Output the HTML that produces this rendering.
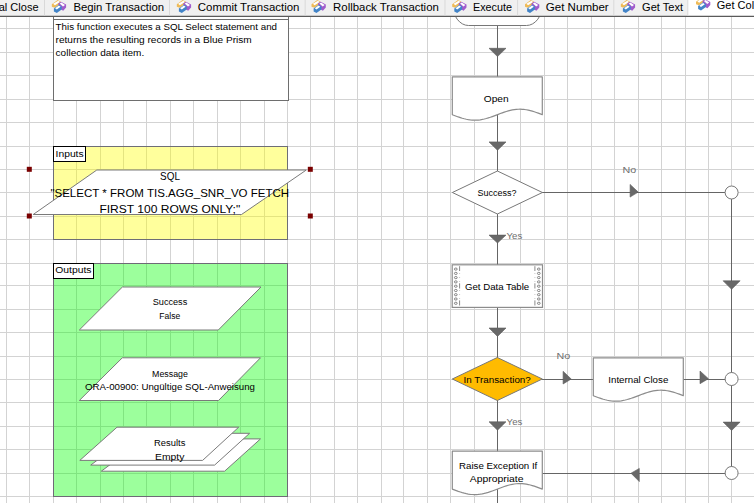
<!DOCTYPE html>
<html><head><meta charset="utf-8"><title>Blue Prism Process</title>
<style>html,body{margin:0;padding:0;background:#fff;overflow:hidden;width:754px;height:503px}svg{display:block}</style>
</head><body>
<svg width="754" height="503" viewBox="0 0 754 503"><g stroke="#d3d3d3" stroke-width="1" shape-rendering="crispEdges"><line x1="6.5" y1="0" x2="6.5" y2="503"/><line x1="29.5" y1="0" x2="29.5" y2="503"/><line x1="53.5" y1="0" x2="53.5" y2="503"/><line x1="76.5" y1="0" x2="76.5" y2="503"/><line x1="100.5" y1="0" x2="100.5" y2="503"/><line x1="123.5" y1="0" x2="123.5" y2="503"/><line x1="146.5" y1="0" x2="146.5" y2="503"/><line x1="170.5" y1="0" x2="170.5" y2="503"/><line x1="193.5" y1="0" x2="193.5" y2="503"/><line x1="217.5" y1="0" x2="217.5" y2="503"/><line x1="240.5" y1="0" x2="240.5" y2="503"/><line x1="264.5" y1="0" x2="264.5" y2="503"/><line x1="287.5" y1="0" x2="287.5" y2="503"/><line x1="310.5" y1="0" x2="310.5" y2="503"/><line x1="334.5" y1="0" x2="334.5" y2="503"/><line x1="357.5" y1="0" x2="357.5" y2="503"/><line x1="381.5" y1="0" x2="381.5" y2="503"/><line x1="403.5" y1="0" x2="403.5" y2="503"/><line x1="427.5" y1="0" x2="427.5" y2="503"/><line x1="450.5" y1="0" x2="450.5" y2="503"/><line x1="474.5" y1="0" x2="474.5" y2="503"/><line x1="497.5" y1="0" x2="497.5" y2="503"/><line x1="520.5" y1="0" x2="520.5" y2="503"/><line x1="544.5" y1="0" x2="544.5" y2="503"/><line x1="567.5" y1="0" x2="567.5" y2="503"/><line x1="591.5" y1="0" x2="591.5" y2="503"/><line x1="614.5" y1="0" x2="614.5" y2="503"/><line x1="638.5" y1="0" x2="638.5" y2="503"/><line x1="661.5" y1="0" x2="661.5" y2="503"/><line x1="685.5" y1="0" x2="685.5" y2="503"/><line x1="708.5" y1="0" x2="708.5" y2="503"/><line x1="731.5" y1="0" x2="731.5" y2="503"/><line x1="0" y1="5.5" x2="754" y2="5.5"/><line x1="0" y1="28.5" x2="754" y2="28.5"/><line x1="0" y1="52.5" x2="754" y2="52.5"/><line x1="0" y1="75.5" x2="754" y2="75.5"/><line x1="0" y1="99.5" x2="754" y2="99.5"/><line x1="0" y1="122.5" x2="754" y2="122.5"/><line x1="0" y1="146.5" x2="754" y2="146.5"/><line x1="0" y1="169.5" x2="754" y2="169.5"/><line x1="0" y1="192.5" x2="754" y2="192.5"/><line x1="0" y1="216.5" x2="754" y2="216.5"/><line x1="0" y1="239.5" x2="754" y2="239.5"/><line x1="0" y1="263.5" x2="754" y2="263.5"/><line x1="0" y1="285.5" x2="754" y2="285.5"/><line x1="0" y1="309.5" x2="754" y2="309.5"/><line x1="0" y1="332.5" x2="754" y2="332.5"/><line x1="0" y1="356.5" x2="754" y2="356.5"/><line x1="0" y1="379.5" x2="754" y2="379.5"/><line x1="0" y1="402.5" x2="754" y2="402.5"/><line x1="0" y1="426.5" x2="754" y2="426.5"/><line x1="0" y1="449.5" x2="754" y2="449.5"/><line x1="0" y1="473.5" x2="754" y2="473.5"/><line x1="0" y1="496.5" x2="754" y2="496.5"/></g>
<g font-family='"Liberation Sans", sans-serif'>
<rect x="53.5" y="5.5" width="235" height="95" fill="#fff" stroke="#6e6e6e" stroke-width="1" shape-rendering="crispEdges"/>
<line x1="53.5" y1="19.5" x2="288.5" y2="19.5" stroke="#6e6e6e" stroke-width="1" shape-rendering="crispEdges"/>
<text x="55.6" y="29.8" font-size="9.2" fill="#000" textLength="221.4" lengthAdjust="spacingAndGlyphs">This function executes a SQL Select statement and</text>
<text x="55.6" y="42.8" font-size="9.2" fill="#000" textLength="196.1" lengthAdjust="spacingAndGlyphs">returns the resulting records in a Blue Prism</text>
<text x="55.6" y="55.9" font-size="9.2" fill="#000" textLength="88.6" lengthAdjust="spacingAndGlyphs">collection data item.</text>
<rect x="53.5" y="146.5" width="234" height="93" fill="#ffff00" fill-opacity="0.39" stroke="#6e6e76" stroke-width="1" shape-rendering="crispEdges"/>
<rect x="53.5" y="146.5" width="32" height="14.5" fill="#fff" stroke="#000" stroke-width="1" shape-rendering="crispEdges"/>
<text x="55.6" y="156.5" font-size="9.2" fill="#000" textLength="28.0" lengthAdjust="spacingAndGlyphs">Inputs</text>
<rect x="53.5" y="263.5" width="234" height="233" fill="#00ff00" fill-opacity="0.39" stroke="#6e6a76" stroke-width="1" shape-rendering="crispEdges"/>
<rect x="53.5" y="263.5" width="40" height="15" fill="#fff" stroke="#000" stroke-width="1" shape-rendering="crispEdges"/>
<text x="55.2" y="273.3" font-size="9.2" fill="#000" textLength="36.3" lengthAdjust="spacingAndGlyphs">Outputs</text>
<polygon points="96.8,170.0 306.3,170.0 241.5,214.5 33.2,214.5" fill="#fff" stroke="#7a7a7a" stroke-width="1"/>
<text x="160.1" y="179.9" font-size="11.1" fill="#000" textLength="19.8" lengthAdjust="spacingAndGlyphs">SQL</text>
<text x="50.4" y="196.6" font-size="11.1" fill="#000" textLength="238.8" lengthAdjust="spacingAndGlyphs">"SELECT * FROM TIS.AGG_SNR_VO FETCH</text>
<text x="99.4" y="213.0" font-size="11.1" fill="#000" textLength="140.8" lengthAdjust="spacingAndGlyphs">FIRST 100 ROWS ONLY;"</text>
<rect x="26.8" y="166.8" width="5" height="5" fill="#7a0000"/>
<rect x="307.8" y="166.8" width="5" height="5" fill="#7a0000"/>
<rect x="26.8" y="213.5" width="5" height="5" fill="#7a0000"/>
<rect x="307.8" y="213.5" width="5" height="5" fill="#7a0000"/>
<polygon points="122.4,287.0 261.0,287.0 218.3,330.0 79.3,330.0" fill="#fff" stroke="#7a7a7a" stroke-width="1"/>
<polygon points="122.3,357.8 260.5,357.8 218.5,400.5 79.3,400.5" fill="#fff" stroke="#7a7a7a" stroke-width="1"/>
<polygon points="144.6,438.9 260.5,438.9 224.6,471.2 101.3,471.2" fill="#fff" stroke="#7a7a7a" stroke-width="1"/>
<polygon points="133.6,433.3 249.6,433.3 214.6,465.1 90.7,465.1" fill="#fff" stroke="#7a7a7a" stroke-width="1"/>
<polygon points="117.0,427.2 238.7,427.2 202.6,460.4 79.8,460.4" fill="#fff" stroke="#7a7a7a" stroke-width="1"/>
<text x="152.7" y="304.9" font-size="9.2" fill="#000" textLength="34.6" lengthAdjust="spacingAndGlyphs">Success</text>
<text x="159.3" y="318.6" font-size="9.2" fill="#000" textLength="20.9" lengthAdjust="spacingAndGlyphs">False</text>
<text x="152.1" y="376.5" font-size="9.2" fill="#000" textLength="35.8" lengthAdjust="spacingAndGlyphs">Message</text>
<text x="85.0" y="390.2" font-size="9.2" fill="#000" textLength="170.0" lengthAdjust="spacingAndGlyphs">ORA-00900: Ungültige SQL-Anweisung</text>
<text x="154.1" y="446.0" font-size="9.2" fill="#000" textLength="31.3" lengthAdjust="spacingAndGlyphs">Results</text>
<text x="155.1" y="459.8" font-size="9.2" fill="#000" textLength="29.3" lengthAdjust="spacingAndGlyphs">Empty</text>
<g stroke="#656565" stroke-width="1" fill="none" shape-rendering="crispEdges"><line x1="497.5" y1="16" x2="497.5" y2="80"/><line x1="497.5" y1="110" x2="497.5" y2="172"/><line x1="497.5" y1="213" x2="497.5" y2="270"/><line x1="497.5" y1="300" x2="497.5" y2="358"/><line x1="497.5" y1="400" x2="497.5" y2="455"/><line x1="497.5" y1="485" x2="497.5" y2="503"/><line x1="542.4" y1="192.5" x2="725" y2="192.5"/><line x1="542.2" y1="379.5" x2="593.3" y2="379.5"/><line x1="683.2" y1="379.5" x2="725" y2="379.5"/><line x1="542" y1="473.5" x2="725" y2="473.5"/><line x1="731.5" y1="199" x2="731.5" y2="466.5"/></g>
<polygon points="489.0,48.3 506.0,48.3 497.5,56.6" fill="#686868" stroke="#5a5a5a" stroke-width="0.6" stroke-linejoin="miter"/>
<polygon points="489.0,141.9 506.0,141.9 497.5,150.3" fill="#686868" stroke="#5a5a5a" stroke-width="0.6" stroke-linejoin="miter"/>
<polygon points="489.0,235.1 506.0,235.1 497.5,243.0" fill="#686868" stroke="#5a5a5a" stroke-width="0.6" stroke-linejoin="miter"/>
<polygon points="489.0,328.0 506.0,328.0 497.5,336.4" fill="#686868" stroke="#5a5a5a" stroke-width="0.6" stroke-linejoin="miter"/>
<polygon points="489.0,421.8 506.0,421.8 497.5,430.2" fill="#686868" stroke="#5a5a5a" stroke-width="0.6" stroke-linejoin="miter"/>
<polygon points="723.1,280.8 740.1,280.8 731.6,289.3" fill="#686868" stroke="#5a5a5a" stroke-width="0.6" stroke-linejoin="miter"/>
<polygon points="723.1,422.1 740.1,422.1 731.6,430.5" fill="#686868" stroke="#5a5a5a" stroke-width="0.6" stroke-linejoin="miter"/>
<polygon points="630.1,184.4 638.2,192.1 630.1,197.1" fill="#686868" stroke="#5a5a5a" stroke-width="0.6" stroke-linejoin="miter"/>
<polygon points="563.1,371.3 571.2,379.0 563.1,384.0" fill="#686868" stroke="#5a5a5a" stroke-width="0.6" stroke-linejoin="miter"/>
<polygon points="700.0,371.0 708.4,378.7 700.0,383.7" fill="#686868" stroke="#5a5a5a" stroke-width="0.6" stroke-linejoin="miter"/>
<polygon points="639.3,468.4 631.0,473.2 639.3,481.6" fill="#686868" stroke="#5a5a5a" stroke-width="0.6" stroke-linejoin="miter"/>
<rect x="452.5" y="-17.5" width="90" height="43" rx="16" ry="21.5" fill="#fff" stroke="#777" stroke-width="1"/>
<path d="M452.3,76.8 H542.3 L542.30,114.70 L540.30,113.93 L538.30,113.18 L536.30,112.46 L534.30,111.79 L532.30,111.16 L530.30,110.61 L528.30,110.14 L526.30,109.76 L524.30,109.47 L522.30,109.28 L520.30,109.20 L518.30,109.23 L516.30,109.36 L514.30,109.60 L512.30,109.94 L510.30,110.37 L508.30,110.88 L506.30,111.47 L504.30,112.12 L502.30,112.82 L500.30,113.56 L498.30,114.32 L496.30,115.08 L494.30,115.84 L492.30,116.58 L490.30,117.28 L488.30,117.93 L486.30,118.52 L484.30,119.03 L482.30,119.46 L480.30,119.80 L478.30,120.04 L476.30,120.17 L474.30,120.20 L472.30,120.12 L470.30,119.93 L468.30,119.64 L466.30,119.26 L464.30,118.79 L462.30,118.24 L460.30,117.61 L458.30,116.94 L456.30,116.22 L454.30,115.47 L452.30,114.70 Z" fill="#fff" stroke="#8c8c8c" stroke-width="1.2" stroke-linejoin="round"/>
<path d="M593.3,357.8 H683.3 L683.30,395.70 L681.30,394.93 L679.30,394.18 L677.30,393.46 L675.30,392.79 L673.30,392.16 L671.30,391.61 L669.30,391.14 L667.30,390.76 L665.30,390.47 L663.30,390.28 L661.30,390.20 L659.30,390.23 L657.30,390.36 L655.30,390.60 L653.30,390.94 L651.30,391.37 L649.30,391.88 L647.30,392.47 L645.30,393.12 L643.30,393.82 L641.30,394.56 L639.30,395.32 L637.30,396.08 L635.30,396.84 L633.30,397.58 L631.30,398.28 L629.30,398.93 L627.30,399.52 L625.30,400.03 L623.30,400.46 L621.30,400.80 L619.30,401.04 L617.30,401.17 L615.30,401.20 L613.30,401.12 L611.30,400.93 L609.30,400.64 L607.30,400.26 L605.30,399.79 L603.30,399.24 L601.30,398.61 L599.30,397.94 L597.30,397.22 L595.30,396.47 L593.30,395.70 Z" fill="#fff" stroke="#8c8c8c" stroke-width="1.2" stroke-linejoin="round"/>
<path d="M452.3,451.2 H542.3 L542.30,489.10 L540.30,488.33 L538.30,487.58 L536.30,486.86 L534.30,486.19 L532.30,485.56 L530.30,485.01 L528.30,484.54 L526.30,484.16 L524.30,483.87 L522.30,483.68 L520.30,483.60 L518.30,483.63 L516.30,483.76 L514.30,484.00 L512.30,484.34 L510.30,484.77 L508.30,485.28 L506.30,485.87 L504.30,486.52 L502.30,487.22 L500.30,487.96 L498.30,488.72 L496.30,489.48 L494.30,490.24 L492.30,490.98 L490.30,491.68 L488.30,492.33 L486.30,492.92 L484.30,493.43 L482.30,493.86 L480.30,494.20 L478.30,494.44 L476.30,494.57 L474.30,494.60 L472.30,494.52 L470.30,494.33 L468.30,494.04 L466.30,493.66 L464.30,493.19 L462.30,492.64 L460.30,492.01 L458.30,491.34 L456.30,490.62 L454.30,489.87 L452.30,489.10 Z" fill="#fff" stroke="#8c8c8c" stroke-width="1.2" stroke-linejoin="round"/>
<polygon points="497.4,171.0 542.4,192.5 497.4,214.0 452.4,192.5" fill="#fff" fill-opacity="1" stroke="#787878" stroke-width="1"/>
<polygon points="497.3,357.5 542.3,379 497.3,400.5 452.3,379" fill="#ffbb00" fill-opacity="1" stroke="#787878" stroke-width="1"/>
<rect x="452.2" y="264.8" width="90.3" height="42.6" fill="#fff" stroke="#8c8c8c" stroke-width="1.2"/>
<g stroke="#8a8a8a" stroke-width="1"><line x1="459.6" y1="266.2" x2="459.6" y2="271"/><line x1="459.6" y1="283.3" x2="459.6" y2="288.5"/><line x1="459.6" y1="300.4" x2="459.6" y2="305.5"/><line x1="534.9" y1="266.2" x2="534.9" y2="271"/><line x1="534.9" y1="283.3" x2="534.9" y2="288.5"/><line x1="534.9" y1="300.4" x2="534.9" y2="305.5"/></g>
<g stroke="#c8c8c8" stroke-width="1" stroke-dasharray="1 3"><line x1="459.6" y1="273" x2="459.6" y2="282"/><line x1="459.6" y1="290" x2="459.6" y2="299"/><line x1="534.9" y1="273" x2="534.9" y2="282"/><line x1="534.9" y1="290" x2="534.9" y2="299"/></g>
<g fill="none" stroke="#6a6a6a" stroke-width="0.8"><ellipse cx="455.8" cy="269.1" rx="1.4" ry="1.1"/><ellipse cx="538.8" cy="269.1" rx="1.4" ry="1.1"/><ellipse cx="455.8" cy="273.4" rx="1.4" ry="1.1"/><ellipse cx="538.8" cy="273.4" rx="1.4" ry="1.1"/><ellipse cx="455.8" cy="277.6" rx="1.4" ry="1.1"/><ellipse cx="538.8" cy="277.6" rx="1.4" ry="1.1"/><ellipse cx="455.8" cy="281.9" rx="1.4" ry="1.1"/><ellipse cx="538.8" cy="281.9" rx="1.4" ry="1.1"/><ellipse cx="455.8" cy="286.2" rx="1.4" ry="1.1"/><ellipse cx="538.8" cy="286.2" rx="1.4" ry="1.1"/><ellipse cx="455.8" cy="290.5" rx="1.4" ry="1.1"/><ellipse cx="538.8" cy="290.5" rx="1.4" ry="1.1"/><ellipse cx="455.8" cy="294.7" rx="1.4" ry="1.1"/><ellipse cx="538.8" cy="294.7" rx="1.4" ry="1.1"/><ellipse cx="455.8" cy="299.0" rx="1.4" ry="1.1"/><ellipse cx="538.8" cy="299.0" rx="1.4" ry="1.1"/><ellipse cx="455.8" cy="303.3" rx="1.4" ry="1.1"/><ellipse cx="538.8" cy="303.3" rx="1.4" ry="1.1"/></g>
<circle cx="731.6" cy="192.5" r="6.5" fill="#fff" stroke="#787878" stroke-width="1"/>
<circle cx="731.6" cy="379" r="6.5" fill="#fff" stroke="#787878" stroke-width="1"/>
<circle cx="731.6" cy="473" r="6.5" fill="#fff" stroke="#787878" stroke-width="1"/>
<text x="483.8" y="102.0" font-size="9.2" fill="#000" textLength="24.9" lengthAdjust="spacingAndGlyphs">Open</text>
<text x="477.6" y="195.9" font-size="9.2" fill="#000" textLength="38.9" lengthAdjust="spacingAndGlyphs">Success?</text>
<text x="465.0" y="289.7" font-size="9.2" fill="#000" textLength="64.2" lengthAdjust="spacingAndGlyphs">Get Data Table</text>
<text x="463.6" y="382.9" font-size="9.2" fill="#000" textLength="67.2" lengthAdjust="spacingAndGlyphs">In Transaction?</text>
<text x="608.3" y="382.8" font-size="9.2" fill="#000" textLength="60.0" lengthAdjust="spacingAndGlyphs">Internal Close</text>
<text x="459.0" y="468.9" font-size="9.2" fill="#000" textLength="78.3" lengthAdjust="spacingAndGlyphs">Raise Exception If</text>
<text x="469.8" y="482.0" font-size="9.2" fill="#000" textLength="53.7" lengthAdjust="spacingAndGlyphs">Appropriate</text>
<text x="622.5" y="172.7" font-size="9" fill="#6e6e6e" textLength="13.7" lengthAdjust="spacingAndGlyphs">No</text>
<text x="506.5" y="238.9" font-size="9.5" fill="#6e6e6e" textLength="15.7" lengthAdjust="spacingAndGlyphs">Yes</text>
<text x="556.6" y="358.6" font-size="9" fill="#6e6e6e" textLength="13.7" lengthAdjust="spacingAndGlyphs">No</text>
<text x="506.6" y="425.0" font-size="9.5" fill="#6e6e6e" textLength="15.7" lengthAdjust="spacingAndGlyphs">Yes</text>
<rect x="0" y="0" width="754" height="16" fill="#f0f0f0"/>
<rect x="687.8" y="0" width="70" height="16" fill="#fff"/>
<line x1="0" y1="16.4" x2="754" y2="16.4" stroke="#5a5a5a" stroke-width="1.1"/>
<line x1="44.5" y1="0" x2="44.5" y2="15.5" stroke="#d9d9d9" stroke-width="1"/>
<line x1="169.5" y1="0" x2="169.5" y2="15.5" stroke="#d9d9d9" stroke-width="1"/>
<line x1="305.2" y1="0" x2="305.2" y2="15.5" stroke="#d9d9d9" stroke-width="1"/>
<line x1="445" y1="0" x2="445" y2="15.5" stroke="#d9d9d9" stroke-width="1"/>
<line x1="517.6" y1="0" x2="517.6" y2="15.5" stroke="#d9d9d9" stroke-width="1"/>
<line x1="613.8" y1="0" x2="613.8" y2="15.5" stroke="#d9d9d9" stroke-width="1"/>
<line x1="687.8" y1="0" x2="687.8" y2="15.5" stroke="#d9d9d9" stroke-width="1"/>
<g transform="translate(48,0)" stroke-linejoin="round"><polygon points="3.8,4.2 9.5,0 12.7,1.6 12.7,3.8 6.6,7.8 3.8,6.8" fill="#eebb58"/><polygon points="5.1,3.7 10.3,0.8 12,2.0 6.9,5.3" fill="#fff"/><polygon points="10.4,3.3 13,1.8 18.1,4.6 18.1,7.6 15.2,10.8 10.4,8" fill="#a05ccc"/><polygon points="11.7,3.5 13.4,2.6 17,5 15,6.6" fill="#fff"/><polygon points="5.9,8.4 11,4.8 13.7,6.4 13.7,9.4 8.8,13 5.9,11.6" fill="#4284c8"/><polygon points="7.1,8.2 10.9,5.6 12.6,6.8 8.8,9.5" fill="#fff"/></g>
<g transform="translate(173,0)" stroke-linejoin="round"><polygon points="3.8,4.2 9.5,0 12.7,1.6 12.7,3.8 6.6,7.8 3.8,6.8" fill="#eebb58"/><polygon points="5.1,3.7 10.3,0.8 12,2.0 6.9,5.3" fill="#fff"/><polygon points="10.4,3.3 13,1.8 18.1,4.6 18.1,7.6 15.2,10.8 10.4,8" fill="#a05ccc"/><polygon points="11.7,3.5 13.4,2.6 17,5 15,6.6" fill="#fff"/><polygon points="5.9,8.4 11,4.8 13.7,6.4 13.7,9.4 8.8,13 5.9,11.6" fill="#4284c8"/><polygon points="7.1,8.2 10.9,5.6 12.6,6.8 8.8,9.5" fill="#fff"/></g>
<g transform="translate(307.7,0)" stroke-linejoin="round"><polygon points="3.8,4.2 9.5,0 12.7,1.6 12.7,3.8 6.6,7.8 3.8,6.8" fill="#eebb58"/><polygon points="5.1,3.7 10.3,0.8 12,2.0 6.9,5.3" fill="#fff"/><polygon points="10.4,3.3 13,1.8 18.1,4.6 18.1,7.6 15.2,10.8 10.4,8" fill="#a05ccc"/><polygon points="11.7,3.5 13.4,2.6 17,5 15,6.6" fill="#fff"/><polygon points="5.9,8.4 11,4.8 13.7,6.4 13.7,9.4 8.8,13 5.9,11.6" fill="#4284c8"/><polygon points="7.1,8.2 10.9,5.6 12.6,6.8 8.8,9.5" fill="#fff"/></g>
<g transform="translate(448.4,0)" stroke-linejoin="round"><polygon points="3.8,4.2 9.5,0 12.7,1.6 12.7,3.8 6.6,7.8 3.8,6.8" fill="#eebb58"/><polygon points="5.1,3.7 10.3,0.8 12,2.0 6.9,5.3" fill="#fff"/><polygon points="10.4,3.3 13,1.8 18.1,4.6 18.1,7.6 15.2,10.8 10.4,8" fill="#a05ccc"/><polygon points="11.7,3.5 13.4,2.6 17,5 15,6.6" fill="#fff"/><polygon points="5.9,8.4 11,4.8 13.7,6.4 13.7,9.4 8.8,13 5.9,11.6" fill="#4284c8"/><polygon points="7.1,8.2 10.9,5.6 12.6,6.8 8.8,9.5" fill="#fff"/></g>
<g transform="translate(521.2,0)" stroke-linejoin="round"><polygon points="3.8,4.2 9.5,0 12.7,1.6 12.7,3.8 6.6,7.8 3.8,6.8" fill="#eebb58"/><polygon points="5.1,3.7 10.3,0.8 12,2.0 6.9,5.3" fill="#fff"/><polygon points="10.4,3.3 13,1.8 18.1,4.6 18.1,7.6 15.2,10.8 10.4,8" fill="#a05ccc"/><polygon points="11.7,3.5 13.4,2.6 17,5 15,6.6" fill="#fff"/><polygon points="5.9,8.4 11,4.8 13.7,6.4 13.7,9.4 8.8,13 5.9,11.6" fill="#4284c8"/><polygon points="7.1,8.2 10.9,5.6 12.6,6.8 8.8,9.5" fill="#fff"/></g>
<g transform="translate(617,0)" stroke-linejoin="round"><polygon points="3.8,4.2 9.5,0 12.7,1.6 12.7,3.8 6.6,7.8 3.8,6.8" fill="#eebb58"/><polygon points="5.1,3.7 10.3,0.8 12,2.0 6.9,5.3" fill="#fff"/><polygon points="10.4,3.3 13,1.8 18.1,4.6 18.1,7.6 15.2,10.8 10.4,8" fill="#a05ccc"/><polygon points="11.7,3.5 13.4,2.6 17,5 15,6.6" fill="#fff"/><polygon points="5.9,8.4 11,4.8 13.7,6.4 13.7,9.4 8.8,13 5.9,11.6" fill="#4284c8"/><polygon points="7.1,8.2 10.9,5.6 12.6,6.8 8.8,9.5" fill="#fff"/></g>
<g transform="translate(692.2,-2.5)" stroke-linejoin="round"><polygon points="3.8,4.2 9.5,0 12.7,1.6 12.7,3.8 6.6,7.8 3.8,6.8" fill="#eebb58"/><polygon points="5.1,3.7 10.3,0.8 12,2.0 6.9,5.3" fill="#fff"/><polygon points="10.4,3.3 13,1.8 18.1,4.6 18.1,7.6 15.2,10.8 10.4,8" fill="#a05ccc"/><polygon points="11.7,3.5 13.4,2.6 17,5 15,6.6" fill="#fff"/><polygon points="5.9,8.4 11,4.8 13.7,6.4 13.7,9.4 8.8,13 5.9,11.6" fill="#4284c8"/><polygon points="7.1,8.2 10.9,5.6 12.6,6.8 8.8,9.5" fill="#fff"/></g>
<text x="38.5" y="10.8" text-anchor="end" font-size="11" fill="#000">Internal Close</text>
<text x="73.4" y="10.8" font-size="10.7" fill="#000" textLength="90.7" lengthAdjust="spacingAndGlyphs">Begin Transaction</text>
<text x="197.8" y="10.8" font-size="10.7" fill="#000" textLength="101.6" lengthAdjust="spacingAndGlyphs">Commit Transaction</text>
<text x="333.1" y="10.8" font-size="10.7" fill="#000" textLength="105.7" lengthAdjust="spacingAndGlyphs">Rollback Transaction</text>
<text x="473.0" y="10.8" font-size="10.7" fill="#000" textLength="39.0" lengthAdjust="spacingAndGlyphs">Execute</text>
<text x="545.8" y="10.8" font-size="10.7" fill="#000" textLength="62.9" lengthAdjust="spacingAndGlyphs">Get Number</text>
<text x="642.1" y="10.8" font-size="10.7" fill="#000" textLength="41.0" lengthAdjust="spacingAndGlyphs">Get Text</text>
<text x="716.8" y="8.8" font-size="11" fill="#000">Get Collection</text>
</g></svg>
</body></html>
